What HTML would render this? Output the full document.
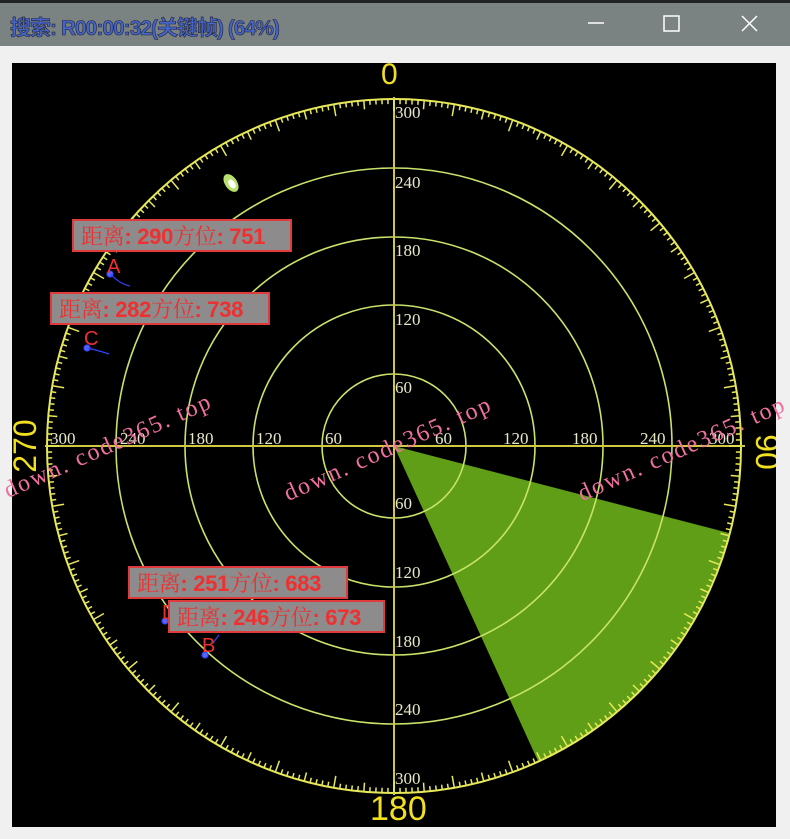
<!DOCTYPE html>
<html><head><meta charset="utf-8"><style>
body{margin:0;width:790px;height:839px;background:#f0f0f0;overflow:hidden;font-family:"Liberation Sans","Noto Sans CJK SC",sans-serif;position:relative}
.tb{position:absolute;left:0;top:0;width:790px;height:46px;background:#7b8282;border-top:3px solid #222;box-sizing:border-box}
.tt{position:absolute;left:10px;top:9px;font-size:21px;color:#4466cc;font-weight:bold;-webkit-text-stroke:0.6px #223;letter-spacing:-1px}
.cv{position:absolute;left:12px;top:63px;width:764px;height:764px;background:#000}
.bx{position:absolute;background:#8d8b8b;border:2px solid #e03a3a;color:#ee3030;font-size:22px;line-height:29px;padding:0 7px;white-space:nowrap;box-sizing:border-box;height:33px;font-weight:bold;letter-spacing:-0.3px}
.bx span{font-family:"Noto Serif CJK SC",serif;font-weight:normal}
.wm{position:absolute;color:#f070a0;font-family:"Liberation Serif",serif;font-size:24px;letter-spacing:2px;transform-origin:0 0;transform:rotate(-24deg);white-space:nowrap}
</style></head><body>
<div class="tb"><div class="tt">搜索: R00:00:32(关键帧) (64%)</div>
<svg width="790" height="46" style="position:absolute;left:0;top:-3px"><line x1="588" y1="23" x2="604" y2="23" stroke="#fff" stroke-width="1.5"/><rect x="664" y="16" width="15" height="15" fill="none" stroke="#fff" stroke-width="1.5"/><path d="M742 16 L757 31 M757 16 L742 31" stroke="#fff" stroke-width="1.5"/></svg></div>
<div class="cv"></div>
<svg id="r" width="790" height="839" style="position:absolute;left:0;top:0">
<defs><clipPath id="c"><rect x="12" y="63" width="764" height="764"/></clipPath></defs>
<g clip-path="url(#c)">
<path d="M394 446 L729 533 A347 347 0 0 1 538 761 Z" fill="#5f9e16"/>
<g fill="none" stroke="#c9e36a" stroke-width="1.6">
<circle cx="394" cy="446" r="72"/><circle cx="394" cy="446" r="141"/><circle cx="394" cy="446" r="209"/><circle cx="394" cy="446" r="278"/><circle cx="394" cy="446" r="347" stroke="#e6e85a" stroke-width="2"/>
</g>
<line x1="45" y1="446" x2="745" y2="446" stroke="#d0c840" stroke-width="2"/>
<line x1="394" y1="97" x2="394" y2="795" stroke="#d0c840" stroke-width="2"/>
<g id="tk" stroke="#e6e85a" stroke-width="1.5"></g>
<g fill="#e8e8c8" font-family="Liberation Serif,serif" font-size="17">
<text x="50" y="444">300</text><text x="120" y="444">240</text><text x="188" y="444">180</text><text x="256" y="444">120</text><text x="325" y="444">60</text>
<text x="435" y="444">60</text><text x="503" y="444">120</text><text x="572" y="444">180</text><text x="640" y="444">240</text><text x="709" y="444">300</text>
<text x="395" y="118">300</text><text x="395" y="188">240</text><text x="395" y="256">180</text><text x="395" y="325">120</text><text x="395" y="393">60</text>
<text x="395" y="509">60</text><text x="395" y="578">120</text><text x="395" y="647">180</text><text x="395" y="715">240</text><text x="395" y="784">300</text>
</g>
<g fill="#f0e020" font-family="Liberation Sans,sans-serif">
<text x="381" y="84" font-size="30">0</text>
<text x="370" y="820" font-size="34">180</text>
<text transform="translate(36,446) rotate(-90)" text-anchor="middle" font-size="32">270</text>
<text transform="translate(756,452) rotate(90)" text-anchor="middle" font-size="32">90</text>
</g>
<ellipse cx="231" cy="183" rx="6" ry="10" transform="rotate(-35 231 183)" fill="#b8e070"/><ellipse cx="232" cy="184" rx="3" ry="5" transform="rotate(-35 232 184)" fill="#fff"/>
<g stroke="#3344ff" fill="#5566ff" stroke-width="1.2">
<circle cx="110" cy="274" r="3"/><path d="M110 274 q10 10 20 12" fill="none"/>
<circle cx="87" cy="348" r="3"/><path d="M87 348 q10 2 22 6" fill="none"/>
<circle cx="165" cy="621" r="3"/><path d="M170 612 l12 -12" fill="none"/>
<circle cx="205" cy="655" r="3"/><path d="M213 643 l6 -8" fill="none"/>
</g>
<g fill="#ee3030" font-size="20" font-family="Liberation Sans,sans-serif">
<text x="107" y="273">A</text><text x="84" y="345">C</text><text x="162" y="619">D</text><text x="202" y="652">B</text>
</g>
</g>
</svg>
<div class="bx" style="left:72px;top:219px;width:220px"><span>距离</span>: 290<span>方位</span>: 751</div>
<div class="bx" style="left:50px;top:292px;width:220px"><span>距离</span>: 282<span>方位</span>: 738</div>
<div class="bx" style="left:128px;top:566px;width:220px"><span>距离</span>: 251<span>方位</span>: 683</div>
<div class="bx" style="left:168px;top:600px;width:217px"><span>距离</span>: 246<span>方位</span>: 673</div>
<div class="wm" style="left:0px;top:480px">down. code365. top</div>
<div class="wm" style="left:280px;top:483px">down. code365. top</div>
<div class="wm" style="left:574px;top:483px">down. code365. top</div>
<script>
var g=document.getElementById('tk'),s='';
for(var i=0;i<360;i++){var a=i*Math.PI/180,L=i%10==0?12:(i%5==0?9:5);
var x1=394+347*Math.sin(a),y1=446-347*Math.cos(a),x2=394+(347-L)*Math.sin(a),y2=446-(347-L)*Math.cos(a);
s+='<line x1="'+x1.toFixed(1)+'" y1="'+y1.toFixed(1)+'" x2="'+x2.toFixed(1)+'" y2="'+y2.toFixed(1)+'"/>';}
g.innerHTML=s;
</script>
</body></html>
